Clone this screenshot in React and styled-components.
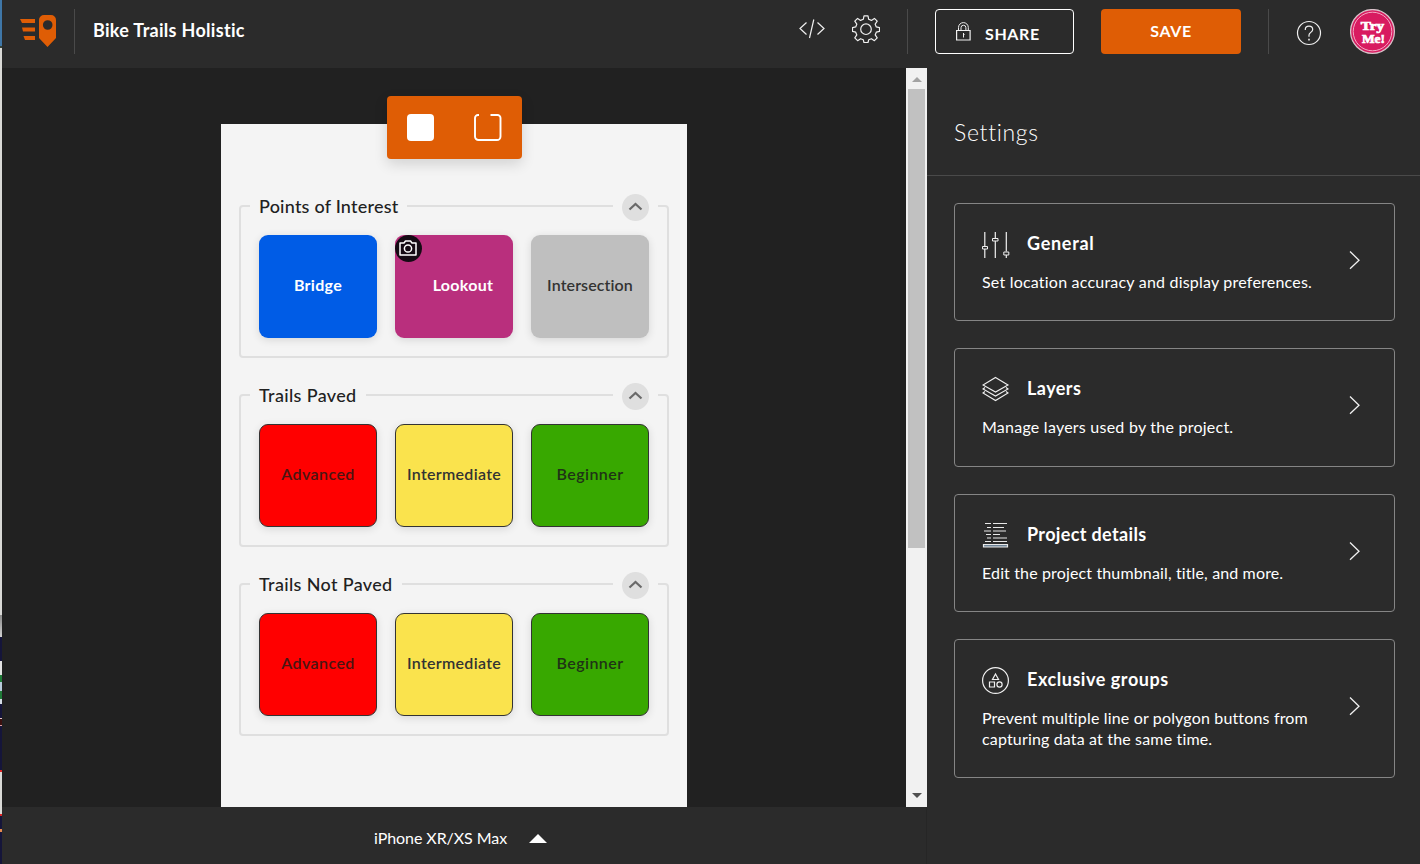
import React, { useState } from "react";
import styled, { createGlobalStyle } from "styled-components";

const GlobalStyle = createGlobalStyle`
  * {
    box-sizing: border-box;
  }

  body {
    margin: 0;
    padding: 0;
    background: #2b2b2b;
    color: #fff;
    font-family: Lato, "Open Sans", sans-serif;
    font-variant-ligatures: none;
    overflow: hidden;
  }

  button {
    font-family: inherit;
    color: inherit;
    cursor: pointer;
  }

  svg {
    display: block;
  }
`;

const groups = [
  {
    title: "Points of Interest",
    spacing: "0.22px",
    tiles: [
      { label: "Bridge", bg: "#005ce6", color: "#fff", bold: true },
      { label: "Lookout", bg: "#b92f7d", color: "#fff", bold: true, camera: true },
      { label: "Intersection", bg: "#bfbfbf", color: "#333", spacing: "0.1px" },
    ],
  },
  {
    title: "Trails Paved",
    spacing: "0.35px",
    tiles: [
      { label: "Advanced", bg: "#ff0000", color: "#4a1512", spacing: "0.45px", outline: true },
      { label: "Intermediate", bg: "#fae34d", color: "#333", outline: true },
      { label: "Beginner", bg: "#38a800", color: "#1f3316", spacing: "0.45px", outline: true },
    ],
  },
  {
    title: "Trails Not Paved",
    spacing: "0.35px",
    tiles: [
      { label: "Advanced", bg: "#ff0000", color: "#4a1512", spacing: "0.45px", outline: true },
      { label: "Intermediate", bg: "#fae34d", color: "#333", outline: true },
      { label: "Beginner", bg: "#38a800", color: "#1f3316", spacing: "0.45px", outline: true },
    ],
  },
];

const GeneralIcon = () => (
  <svg width="28" height="28" viewBox="0 0 28 28" fill="none" stroke="#f0f0f0">
    <path d="M2.800 1v14.500M2.800 18v9M13.300 1v6.500M13.300 10v17M24.300 1v19.500M24.300 24v3" strokeWidth="1.200" />
    <path d="M.5 15.500h5v2.500h-5zM10.500 7.500h5.500v2.500h-5.500zM21.800 21h5v3h-5z" />
  </svg>
);

const LayersIcon = () => (
  <svg width="28" height="28" viewBox="0 0 28 28" fill="none" stroke="#f0f0f0" strokeWidth="1.1">
    <path d="M13.500 1.500L26 9l-12.500 7L1 9z" />
    <path d="M3 11.500L1 13l12.500 7L26 13l-2-1.500" />
    <path d="M3 15.500L1 17l12.500 7.500L26 17l-2-1.500" />
  </svg>
);

const DetailsIcon = () => (
  <svg width="28" height="28" viewBox="0 0 28 28" fill="none" stroke="#e8e8e8">
    <path d="M3 1.500h6M11 1.500h14M5 5.500h4M11 5.500h11M2 9h7M11 9h13M4 12.500h5M11 12.500h7M5 16h4M11 16h14M3 19.500h6M11 19.500h14" strokeWidth="1.200" />
    <path d="M1.500 22.500h24v2.500h-24z" fill="#6d8296" strokeWidth="1.200" />
  </svg>
);

const ExclusiveIcon = () => (
  <svg width="28" height="28" viewBox="0 0 28 28" fill="none" stroke="#f0f0f0" strokeWidth="1.200">
    <circle cx="13.500" cy="13.500" r="12.900" />
    <path d="M13.500 7l3 5.500h-6zM7.500 15h5v5h-5z" />
    <circle cx="17.500" cy="17.500" r="2.600" />
  </svg>
);

const settings = [
  {
    title: "General",
    text: "Set location accuracy and display preferences.",
    Icon: GeneralIcon,
    height: 118,
    spacing: "0.7px",
    textSpacing: "0.21px",
  },
  {
    title: "Layers",
    text: "Manage layers used by the project.",
    Icon: LayersIcon,
    height: 119,
    spacing: "0.45px",
    textSpacing: "0.24px",
  },
  {
    title: "Project details",
    text: "Edit the project thumbnail, title, and more.",
    Icon: DetailsIcon,
    height: 118,
    spacing: "0.35px",
    textSpacing: "0.14px",
  },
  {
    title: "Exclusive groups",
    text: "Prevent multiple line or polygon buttons from capturing data at the same time.",
    Icon: ExclusiveIcon,
    height: 139,
    spacing: "0.55px",
    textSpacing: "0.16px",
  },
];

const Logo = () => (
  <svg width="38" height="34" viewBox="0 0 38 34" fill="#df5d05">
    <path d="M0 4h15v4H2zM2 12.500h13v4H3zM3.500 21H15v4H5z" />
    <path
      fillRule="evenodd"
      d="M24 0h7a5 5 0 0 1 5 5v18l-8.500 9-8.500-9V5a5 5 0 0 1 5-5zM27.700 5.200a4.800 4.800 0 1 0 0 9.600 4.800 4.800 0 0 0 0-9.600z"
    />
  </svg>
);

const CodeIcon = () => (
  <svg width="26" height="20" viewBox="0 0 26 20" fill="none" stroke="#f0f0f0" strokeWidth="1.200">
    <path d="M7.500 3.500L1 9.500l6.500 6M18.500 3.500l6.500 6-6.500 6M14.800.5L10.500 19" />
  </svg>
);

const GearIcon = () => (
  <svg width="28" height="28" viewBox="0 0 28 28" fill="none" stroke="#f0f0f0" strokeWidth="1.200">
    <path
      strokeLinejoin="round"
      d="M12 .8h4l.7 3.500 2.700 1.100 3-2 2.800 2.800-2 3 1.100 2.700 3.200.7v3.800l-3.200.8-1.100 2.700 2 3-2.800 2.800-3-2-2.700 1.100-.7 2.700h-4l-.7-2.700-2.700-1.100-3 2-2.800-2.800 2-3-1.100-2.700-3.200-.8v-3.800l3.200-.7 1.100-2.700-2-3 2.800-2.800 3 2 2.700-1.100z"
    />
    <circle cx="14" cy="14.200" r="5.300" />
  </svg>
);

const LockIcon = () => (
  <svg width="15" height="19" viewBox="0 0 15 19" fill="none" stroke="#f0f0f0">
    <path d="M.6 8.500h13.500v9.500H.6z" strokeWidth="1.200" />
    <path d="M2.500 8.500V5.500a4.900 4.900 0 0 1 9.800 0v3M5 8.500V5.700a2.400 2.400 0 0 1 4.900 0v2.800M7.500 11v4.500M7.500 12.500h1" />
  </svg>
);

const HelpIcon = () => (
  <svg width="26" height="26" viewBox="0 0 26 26" fill="none" stroke="#f0f0f0" strokeWidth="1.200">
    <circle cx="13" cy="13" r="11.500" />
    <path d="M9.300 10V9.500c0-2 1.600-3.300 3.700-3.300s3.700 1.300 3.700 3.300c0 2.700-3.700 3-3.700 5.500v1.800" />
    <path d="M13 18.800v1.600" strokeWidth="1.600" />
  </svg>
);

const Badge = () => (
  <svg width="46" height="46" viewBox="0 0 46 46">
    <circle cx="22.500" cy="22.500" r="21.900" fill="#d81b60" stroke="#d9c3ca" strokeWidth="1.300" />
    <circle cx="22.500" cy="22.500" r="19.300" fill="none" stroke="#f3a9c3" strokeWidth="1" />
    <g
      fill="#fff"
      stroke="#fff"
      strokeWidth=".7"
      fontFamily="'Liberation Serif', serif"
      fontWeight="700"
      fontSize="13"
      textAnchor="middle"
    >
      <text x="22.500" y="20.500" textLength="23.500" lengthAdjust="spacingAndGlyphs">Try</text>
      <text x="23.500" y="34" textLength="23" lengthAdjust="spacingAndGlyphs">Me!</text>
    </g>
  </svg>
);

const CameraIcon = () => (
  <svg width="18" height="16" viewBox="0 0 18 16" fill="none" stroke="#fff" strokeWidth="1.500">
    <path d="M1 3h4l1.500-2h5L13 3h4v12H1z" strokeLinejoin="round" />
    <circle cx="9" cy="8.500" r="3.600" />
  </svg>
);

const App = () => {
  const [collapsed, setCollapsed] = useState({});

  const toggle = (title) => {
    setCollapsed({ ...collapsed, [title]: !collapsed[title] });
  };

  return (
    <>
      <GlobalStyle />
      <Window>
        <DesktopEdge />
        <Shell>
          {/* Top bar */}
          <Header>
            <LogoBox>
              <Logo />
            </LogoBox>
            <ProjectName>Bike Trails Holistic</ProjectName>
            <Tools>
              <CodeIcon />
              <GearIcon />
            </Tools>
            <ShareButton>
              <LockIcon />
              <span>SHARE</span>
            </ShareButton>
            <SaveButton>SAVE</SaveButton>
            <Account>
              <HelpIcon />
              <Badge />
            </Account>
          </Header>

          <Main>
            <Designer>
              <Stage>
                <Canvas>
                  <Phone>
                    <ShapeBar>
                      <FilledShape />
                      <svg width="28" height="28" viewBox="0 0 28 28" fill="none" stroke="#fff" strokeWidth="1.900">
                        <path d="M5 1H4a3 3 0 0 0-3 3V22.500a3.500 3.500 0 0 0 3.500 3.500H23a3.500 3.500 0 0 0 3.500-3.500V4a3 3 0 0 0-3-3H16.500" />
                      </svg>
                    </ShapeBar>
                    {groups.map((group) => (
                      <Group key={group.title}>
                        <GroupHead>
                          <Legend $spacing={group.spacing}>{group.title}</Legend>
                          <ToggleGap>
                            <Toggle onClick={() => toggle(group.title)}>
                              <svg width="15" height="10" viewBox="0 0 15 10" fill="none" stroke="#6a6a6a" strokeWidth="2.200">
                                <path d="M1.500 7.500l6-5.600 6 5.600" />
                              </svg>
                            </Toggle>
                          </ToggleGap>
                        </GroupHead>
                        {!collapsed[group.title] && (
                          <Tiles>
                            {group.tiles.map((tile) => (
                              <Tile
                                key={tile.label}
                                $bg={tile.bg}
                                $color={tile.color}
                                $bold={tile.bold}
                                $outline={tile.outline}
                                $camera={tile.camera}
                                $spacing={tile.spacing}
                              >
                                {tile.camera && (
                                  <CameraBadge>
                                    <CameraIcon />
                                  </CameraBadge>
                                )}
                                {tile.label}
                              </Tile>
                            ))}
                          </Tiles>
                        )}
                      </Group>
                    ))}
                  </Phone>
                </Canvas>
                <Scrollbar>
                  <Arrow $up />
                  <Thumb />
                  <Arrow />
                </Scrollbar>
              </Stage>
              <DeviceBar>
                <span>iPhone XR/XS Max</span>
                <DeviceCaret />
              </DeviceBar>
            </Designer>

            {/* Settings panel */}
            <Panel>
              <PanelTitle>Settings</PanelTitle>
              <Cards>
                {settings.map(({ title, text, Icon, height, spacing, textSpacing }) => (
                  <Card key={title} $height={height}>
                    <CardBody>
                      <CardHead>
                        <Icon />
                        <CardTitle $spacing={spacing}>{title}</CardTitle>
                      </CardHead>
                      <CardText $spacing={textSpacing}>{text}</CardText>
                    </CardBody>
                    <svg width="12" height="20" viewBox="0 0 12 20" fill="none" stroke="#f0f0f0" strokeWidth="1.300">
                      <path d="M1 1.500l9 8.700-9 8.600" />
                    </svg>
                  </Card>
                ))}
              </Cards>
            </Panel>
          </Main>
        </Shell>
      </Window>
    </>
  );
};

const Window = styled.div`
  display: flex;
  width: 1420px;
  height: 864px;
  overflow: hidden;
`;

/* sliver of the desktop left of the window */
const DesktopEdge = styled.div`
  width: 2px;
  background: linear-gradient(
    #3f77a8 0 46px,
    #34433a 46px 48px,
    #d9d9d6 48px 615px,
    #8a8a8a 615px,
    #d0d0d0 637px,
    #15153a 637px 661px,
    #e2e2e2 661px 675px,
    #1f7a38 675px 682px,
    #b8cbdc 682px 691px,
    #1f7a38 691px 699px,
    #d5dde5 699px 704px,
    #15153a 704px 718px,
    #e5c8c8 718px 719px,
    #3a1010 719px 725px,
    #e0a0a0 725px 726px,
    #15153a 726px 770px,
    #d22 770px 772px,
    #d9d9d6 772px 814px,
    #d22 814px 816px,
    #15153a 816px 829px,
    #e58a50 829px 832px,
    #15153a 832px
  );
`;

const Shell = styled.div`
  flex: 1;
  display: flex;
  flex-direction: column;
`;

const Header = styled.header`
  display: flex;
  align-items: flex-start;
  height: 68px;
  padding: 9px 24px 0 18px;
  background: #2b2b2b;
`;

const LogoBox = styled.div`
  width: 55px;
  height: 45px;
  padding-top: 6px;
  border-right: 1px solid #4a4a4a;
`;

const ProjectName = styled.h1`
  flex: 1;
  margin: 0 0 0 18px;
  font-size: 18px;
  font-weight: 700;
  line-height: 43px;
  letter-spacing: 0.3px;
`;

const Tools = styled.div`
  display: flex;
  align-items: center;
  gap: 27px;
  height: 45px;
  padding: 0 27px 6px 0;
  border-right: 1px solid #4a4a4a;
`;

const ShareButton = styled.button`
  display: flex;
  align-items: center;
  gap: 14px;
  width: 139px;
  height: 45px;
  margin-left: 27px;
  padding: 0 0 1px 20px;
  background: none;
  border: 1px solid #fff;
  border-radius: 4px;
  font-size: 16px;
  font-weight: 700;
  letter-spacing: 0.6px;

  span {
    padding-top: 4px;
  }
`;

const SaveButton = styled.button`
  width: 140px;
  height: 45px;
  margin-left: 27px;
  padding: 0 0 2px;
  background: #df5d05;
  border: 0;
  border-radius: 4px;
  font-size: 16px;
  font-weight: 700;
  letter-spacing: 0.6px;
`;

const Account = styled.div`
  display: flex;
  align-items: center;
  gap: 28px;
  height: 45px;
  margin-left: 27px;
  padding-left: 27px;
  border-left: 1px solid #4a4a4a;

  svg:first-child {
    margin-top: 2px;
  }
`;

const Main = styled.main`
  flex: 1;
  display: flex;
`;

const Designer = styled.section`
  display: flex;
  flex-direction: column;
  width: 925px;
`;

const Stage = styled.div`
  display: flex;
  height: 739px;
`;

const Canvas = styled.div`
  flex: 1;
  display: flex;
  justify-content: center;
  padding-top: 56px;
  background: #212121;
`;

const Phone = styled.div`
  display: flex;
  flex-direction: column;
  align-items: center;
  gap: 36px;
  width: 466px;
  background: #f4f4f4;
`;

const ShapeBar = styled.div`
  display: flex;
  align-items: center;
  justify-content: space-between;
  width: 135px;
  height: 63px;
  margin: -28px 0 10px;
  padding: 0 20px;
  background: #df5d05;
  border-radius: 4px;
  box-shadow: 0 5px 14px rgba(0, 0, 0, 0.14);
`;

const FilledShape = styled.div`
  width: 27px;
  height: 27px;
  background: #fff;
  border-radius: 4px;
`;

const Group = styled.section`
  width: 430px;
  height: 153px;
  border: 2px solid #dfdfdf;
  border-radius: 4px;
`;

const GroupHead = styled.div`
  display: flex;
  align-items: center;
  justify-content: space-between;
  height: 27px;
  margin-top: -13px;
  padding: 0 9px;
`;

const Legend = styled.h2`
  margin: 0;
  padding: 0 9px 3px;
  background: #f4f4f4;
  color: #212121;
  font-size: 18px;
  font-weight: 500;
  line-height: 24px;
  letter-spacing: ${(props) => props.$spacing};
`;

const ToggleGap = styled.div`
  padding: 0 9px;
  background: #f4f4f4;
`;

const Toggle = styled.button`
  display: flex;
  align-items: center;
  justify-content: center;
  width: 27px;
  height: 27px;
  padding: 0 0 1px;
  background: #dfdfdf;
  border: 0;
  border-radius: 50%;
`;

const Tiles = styled.div`
  display: flex;
  gap: 18px;
  padding: 14px 18px 0;
`;

const Tile = styled.div`
  position: relative;
  display: flex;
  align-items: center;
  justify-content: center;
  width: 118px;
  height: 103px;
  padding: 0 0 4px ${(props) => (props.$camera ? "18px" : "0")};
  background: ${(props) => props.$bg};
  border: ${(props) => (props.$outline ? "1px solid #333" : "0")};
  border-radius: 9px;
  box-shadow: 0 2px 9px rgba(0, 0, 0, 0.12);
  color: ${(props) => props.$color};
  font-size: 16px;
  font-weight: ${(props) => (props.$bold ? 700 : 600)};
  letter-spacing: ${(props) => props.$spacing || "0.3px"};
`;

const CameraBadge = styled.div`
  position: absolute;
  top: 0;
  left: 0;
  display: flex;
  align-items: center;
  justify-content: center;
  width: 27px;
  height: 27px;
  padding: 0 1px 2px 0;
  background: #150b14;
  border-radius: 50%;
`;

const Scrollbar = styled.div`
  display: flex;
  flex-direction: column;
  align-items: center;
  width: 21px;
  background: #f1f1f1;
`;

const Arrow = styled.div`
  width: 0;
  height: 0;
  margin: ${(props) => (props.$up ? "9px 0 7px" : "auto 0 9px")};
  border: 5px solid transparent;
  border-top: ${(props) => (props.$up ? "0" : "5px solid #505050")};
  border-bottom: ${(props) => (props.$up ? "5px solid #a3a3a3" : "0")};
`;

const Thumb = styled.div`
  width: 17px;
  height: 459px;
  background: #c1c1c1;
`;

const DeviceBar = styled.footer`
  flex: 1;
  display: flex;
  align-items: center;
  gap: 22px;
  padding: 4px 0 0 372px;
  border-right: 1px solid #262626;
  font-size: 16px;
  letter-spacing: -0.06px;
`;

const DeviceCaret = styled.div`
  margin-top: 2px;
  border: 9px solid transparent;
  border-top: 0;
  border-bottom-color: #fff;
`;

const Panel = styled.aside`
  flex: 1;
  background: #2b2b2b;
`;

const PanelTitle = styled.h2`
  height: 108px;
  margin: 0;
  padding: 50px 27px 0;
  border-bottom: 1px solid #4a4a4a;
  font-size: 23px;
  font-weight: 300;
  line-height: 28px;
  letter-spacing: 0.7px;
`;

const Cards = styled.div`
  display: flex;
  flex-direction: column;
  gap: 27px;
  padding: 27px 25px 0 27px;
`;

const Card = styled.article`
  display: flex;
  align-items: center;
  justify-content: space-between;
  height: ${(props) => props.$height}px;
  padding: 0 33px 5px 27px;
  border: 1px solid #858585;
  border-radius: 4px;
`;

const CardBody = styled.div`
  width: 336px;
  align-self: flex-start;
  padding-top: 26px;
`;

const CardHead = styled.div`
  display: flex;
  align-items: center;
  gap: 17px;
  height: 30px;
`;

const CardTitle = styled.h3`
  margin: 0;
  padding-bottom: 4px;
  font-size: 18px;
  font-weight: 700;
  line-height: 24px;
  letter-spacing: ${(props) => props.$spacing};
`;

const CardText = styled.p`
  margin: 11px 0 0;
  font-size: 16px;
  line-height: 21px;
  letter-spacing: ${(props) => props.$spacing};
`;

export default App;
